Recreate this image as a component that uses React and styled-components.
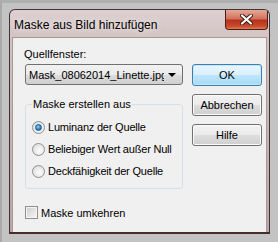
import React from 'react'
import styled, { createGlobalStyle } from 'styled-components'

const Global = createGlobalStyle`
  html, body { margin: 0; padding: 0; }
  body {
    background: #bdbdbd;
    font-family: "Liberation Sans", Arial, sans-serif;
  }
`

const Page = styled.div`
  width: 278px;
  height: 242px;
  box-sizing: border-box;
  padding: 6px 8px 0 7px;
  background: #c3c3c3;
  border-left: 2px solid #a9a9a9;
  border-top: 3px solid #b0b0b0;
`

const Window = styled.div`
  width: 261px;
  height: 225px;
  box-sizing: border-box;
  border: 1px solid #3f3335;
  border-bottom: 2px solid #4a2c2f;
  border-radius: 6px 6px 0 0;
  background: linear-gradient(180deg, #ddd0d0 0%, #d2c2c2 14%, #b9a5a5 100%);
  display: flex;
  flex-direction: column;
  overflow: hidden;
`

const TitleBar = styled.div`
  height: 27px;
  display: flex;
  align-items: flex-start;
  justify-content: space-between;
  padding-left: 4px;
  flex: none;
`

const Title = styled.div`
  font-size: 12px;
  color: #000;
  margin-top: 8px;
  text-shadow: 0 0 6px rgba(255, 255, 255, 0.9);
`

const CloseButton = styled.div`
  width: 43px;
  height: 20px;
  margin-right: 1px;
  box-sizing: border-box;
  border: 1px solid #4b1e17;
  border-top: none;
  border-radius: 0 0 4px 4px;
  background: linear-gradient(180deg, #e6a897 0%, #d1745d 45%, #b8321b 55%, #c84a2c 85%, #e07a55 100%);
  display: flex;
  align-items: center;
  justify-content: center;
`

const Body = styled.div`
  flex: 1;
  margin: 0 2px 0 2px;
  background: #f0f0f0;
  border: 1px solid #a89898;
  border-bottom: none;
  display: flex;
  gap: 9px;
  padding: 9px 4px 0 12px;
`

const LeftColumn = styled.div`
  width: 158px;
  display: flex;
  flex-direction: column;
`

const RightColumn = styled.div`
  width: 71px;
  display: flex;
  flex-direction: column;
  gap: 8px;
  padding-top: 17px;
`

const Label = styled.div`
  font-size: 11px;
  line-height: 14px;
  color: #000;
  margin-left: -1px;
  margin-bottom: 3px;
`

const Combo = styled.div`
  height: 21px;
  box-sizing: border-box;
  border: 1px solid #707070;
  border-radius: 3px;
  background: linear-gradient(180deg, #f2f2f2 0%, #ebebeb 50%, #dddddd 51%, #cfcfcf 100%);
  display: flex;
  align-items: center;
  padding-left: 3px;
  font-size: 11px;
  overflow: hidden;
`

const ComboText = styled.span`
  flex: 1;
  min-width: 0;
  white-space: nowrap;
  overflow: hidden;
`

const ComboArrow = styled.span`
  width: 0;
  height: 0;
  margin: 0 6px 0 4px;
  border-left: 4px solid transparent;
  border-right: 4px solid transparent;
  border-top: 4px solid #000;
  flex: none;
`

const Group = styled.fieldset`
  margin: 12px 0 0 0;
  padding: 10px 0 0 6px;
  height: 92px;
  box-sizing: border-box;
  border: 1px solid #d5dfe5;
  border-radius: 3px;
  display: flex;
  flex-direction: column;
  gap: 9px;
`

const Legend = styled.legend`
  font-size: 11px;
  padding: 0 1px;
  margin-left: 0;
  line-height: 14px;
`

const Option = styled.label`
  display: flex;
  align-items: center;
  gap: 3px;
  font-size: 11px;
  line-height: 13px;
  letter-spacing: -0.2px;
`

const Radio = styled.span`
  width: 13px;
  height: 13px;
  box-sizing: border-box;
  border-radius: 50%;
  border: 1px solid #8e8f8f;
  background: radial-gradient(circle at 60% 60%, #fcfcfc 0%, #e6e6e6 60%, #cfcfcf 100%);
  display: flex;
  align-items: center;
  justify-content: center;
  flex: none;

  &::after {
    content: '';
    display: ${p => (p.$checked ? 'block' : 'none')};
    width: 5px;
    height: 5px;
    border-radius: 50%;
    background: radial-gradient(circle at 40% 35%, #8ad2f6 0%, #2a7fc0 60%, #0d4b8c 100%);
    border: 1px solid #1d5d93;
  }
`

const CheckRow = styled.label`
  display: flex;
  align-items: center;
  gap: 3px;
  font-size: 11px;
  margin-top: 17px;
`

const Checkbox = styled.span`
  width: 13px;
  height: 13px;
  box-sizing: border-box;
  border: 1px solid #8e8f8f;
  background: linear-gradient(135deg, #cbcbcb 0%, #e6e6e6 60%, #f5f5f5 100%);
  box-shadow: inset 0 0 0 1px #f4f4f4;
  flex: none;
`

const Button = styled.div`
  height: 22px;
  box-sizing: border-box;
  border: 1px solid ${p => (p.$default ? '#3c7fb1' : '#707070')};
  border-radius: 3px;
  background: ${p =>
    p.$default
      ? 'linear-gradient(180deg, #eaf6fd 0%, #d9f0fc 50%, #bee6fd 51%, #a7d9f5 100%)'
      : 'linear-gradient(180deg, #f2f2f2 0%, #ebebeb 50%, #dddddd 51%, #cfcfcf 100%)'};
  box-shadow: ${p => (p.$default ? 'inset 0 0 0 1px #c5e7fa' : 'inset 0 0 0 1px #fcfcfc')};
  display: flex;
  align-items: center;
  justify-content: center;
  font-size: 11px;
  color: #000;
`

export default function App() {
  return (
    <Page>
      <Global />
      <Window>
        <TitleBar>
          <Title>Maske aus Bild hinzufügen</Title>
          <CloseButton>
            <svg width="13" height="11" viewBox="0 0 13 11">
              <path d="M2 1.5 L11 9.5 M11 1.5 L2 9.5" stroke="#3a1a14" strokeWidth="4" strokeLinecap="round" />
              <path d="M2 1.5 L11 9.5 M11 1.5 L2 9.5" stroke="#ffffff" strokeWidth="2.2" strokeLinecap="round" />
            </svg>
          </CloseButton>
        </TitleBar>
        <Body>
          <LeftColumn>
            <Label>Quellfenster:</Label>
            <Combo>
              <ComboText>Mask_08062014_Linette.jpg</ComboText>
              <ComboArrow />
            </Combo>
            <Group>
              <Legend>Maske erstellen aus</Legend>
              <Option><Radio $checked />Luminanz der Quelle</Option>
              <Option><Radio />Beliebiger Wert außer Null</Option>
              <Option><Radio />Deckfähigkeit der Quelle</Option>
            </Group>
            <CheckRow><Checkbox />Maske umkehren</CheckRow>
          </LeftColumn>
          <RightColumn>
            <Button $default>OK</Button>
            <Button>Abbrechen</Button>
            <Button>Hilfe</Button>
          </RightColumn>
        </Body>
      </Window>
    </Page>
  )
}
